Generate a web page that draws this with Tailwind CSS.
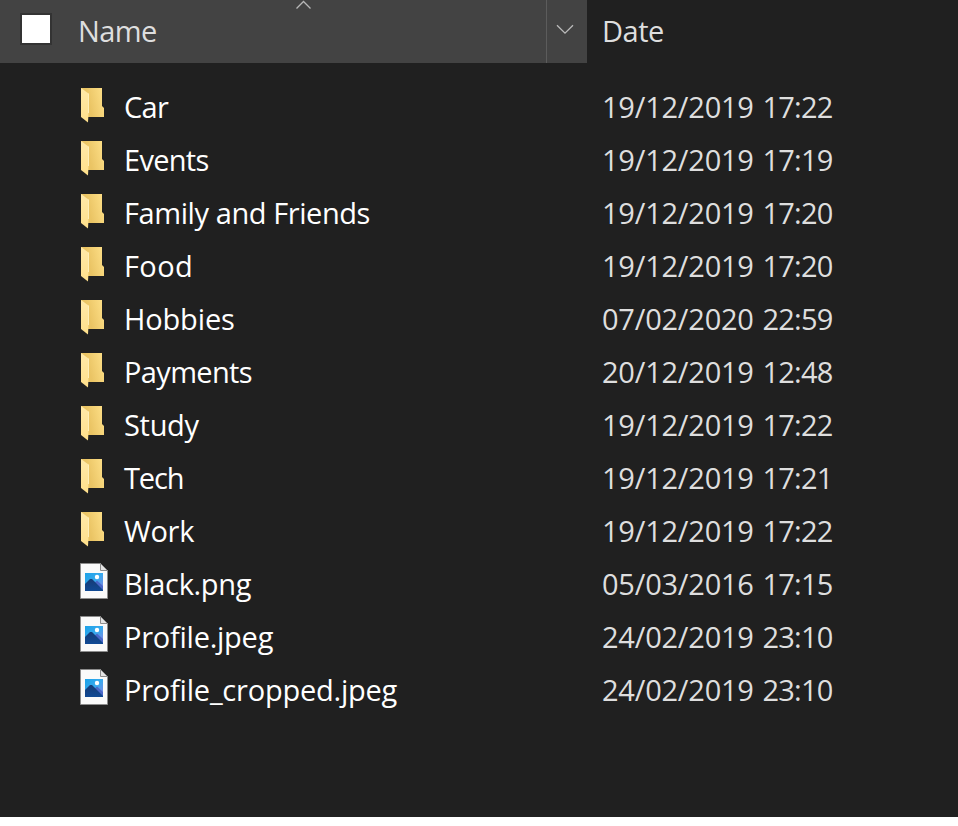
<!DOCTYPE html>
<html lang="en">
<head>
<meta charset="utf-8">
<title>Files</title>
<script src="https://cdn.jsdelivr.net/npm/@tailwindcss/browser@4"></script>
</head>
<body class="bg-white overflow-hidden">
<svg width="0" height="0" class="absolute">
  <defs>
    <linearGradient id="back" x1="0" y1="0.3" x2="1" y2="0"><stop offset="0.25" stop-color="#eac464"/><stop offset="1" stop-color="#ffe18a"/></linearGradient>
    <linearGradient id="flap" x1="0" y1="0" x2="0" y2="1"><stop offset="0" stop-color="#ffe9a9"/><stop offset="1" stop-color="#ffe08b"/></linearGradient>
    <linearGradient id="sky" x1="0" y1="0" x2="1" y2="1"><stop offset="0" stop-color="#1ba2e8"/><stop offset="0.5" stop-color="#38a9ed"/><stop offset="1" stop-color="#8b7fe0"/></linearGradient>
    <linearGradient id="hill" x1="0" y1="0" x2="0" y2="1"><stop offset="0" stop-color="#163b75"/><stop offset="1" stop-color="#104a95"/></linearGradient>
    <symbol id="folder" viewBox="0 0 28 36">
      <path d="M1 1H22V19L24 21V30H1Z" fill="url(#back)"/>
      <path d="M1 1L8.5 6.5V26.5L8 35.5L1 30Z" fill="url(#flap)"/>
      <path d="M8.5 6.5V26" stroke="#fff0c0" stroke-width="0.9"/>
    </symbol>
    <symbol id="image" viewBox="0 0 28 36">
      <path d="M0.5 0.5H20.5L27.5 7.5V35.5H0.5Z" fill="#fafafa" stroke="#8c8c8c"/>
      <path d="M20.5 0.5V7.5H27.5Z" fill="#e4e4e4" stroke="#8c8c8c"/>
      <path d="M5 10H23V28H5Z" fill="url(#sky)"/>
      <path d="M13 21L17 17.5L23 23V28H13Z" fill="#4a67c8"/>
      <path d="M5 21L10 16L12 16L23 27V28H5Z" fill="url(#hill)"/>
      <circle cx="17" cy="14" r="2.2" fill="#fff"/>
    </symbol>
  </defs>
</svg>
<main class="h-[817px] w-[958px] bg-[#202020] font-['Open_Sans','Noto_Sans',sans-serif] text-[29px] leading-[53px] text-white">
  <header class="flex h-[63px] text-[#dedede]">
    <div class="relative flex w-[546px] bg-[#434343] pl-5">
      <span class="mt-[13px] size-8 border-2 border-[#333] bg-white"></span>
      <span class="ml-[26px] mt-1 tracking-[-0.6px]">Name</span>
      <svg class="absolute left-[295px] top-0" width="17" height="10" fill="none" stroke="#b8b8b8" stroke-width="1.3"><path d="M1.5 8.5L8.5 1.5L15.5 8.5"/></svg>
    </div>
    <div class="flex w-[41px] justify-center border-l border-[#5c5c5c] bg-[#434343] pr-[5px] pt-6">
      <svg width="18" height="11" fill="none" stroke="#bcbcbc" stroke-width="1.3"><path d="M1 1.2L9 9.2L17 1.2"/></svg>
    </div>
    <div class="mt-1 pl-[15px] tracking-[-0.5px]">Date</div>
  </header>
  <section id="rows" class="pl-20 pt-[17px]"></section>
</main>
<script>
  // name, date, time, icon, letter spacing of the name
  const files = [
    ['Car', '19/12/2019', '17:22', 'folder', -0.7],
    ['Events', '19/12/2019', '17:19', 'folder', -0.7],
    ['Family and Friends', '19/12/2019', '17:20', 'folder', -0.42],
    ['Food', '19/12/2019', '17:20', 'folder', 0.4],
    ['Hobbies', '07/02/2020', '22:59', 'folder', -0.15],
    ['Payments', '20/12/2019', '12:48', 'folder', -0.65],
    ['Study', '19/12/2019', '17:22', 'folder', -0.3],
    ['Tech', '19/12/2019', '17:21', 'folder', -1.1],
    ['Work', '19/12/2019', '17:22', 'folder', -0.3],
    ['Black.png', '05/03/2016', '17:15', 'image', -0.35],
    ['Profile.jpeg', '24/02/2019', '23:10', 'image', -0.25],
    ['Profile_cropped.jpeg', '24/02/2019', '23:10', 'image', -0.22],
  ];
  document.getElementById('rows').innerHTML = files.map(([name, date, time, icon, spacing]) => `
    <div class="flex h-[53px]">
      <svg class="${icon === 'folder' ? 'mt-[7px]' : 'mt-[6px]'} h-9 w-7"><use href="#${icon}"/></svg>
      <span class="w-[494px] pl-4" style="letter-spacing:${spacing}px">${name}</span>
      <time class="text-[#dedede] tracking-[-0.22px] [word-spacing:1.5px]">${date} <span class="tracking-[-0.8px]">${time}</span></time>
    </div>`).join('');
</script>
</body>
</html>
